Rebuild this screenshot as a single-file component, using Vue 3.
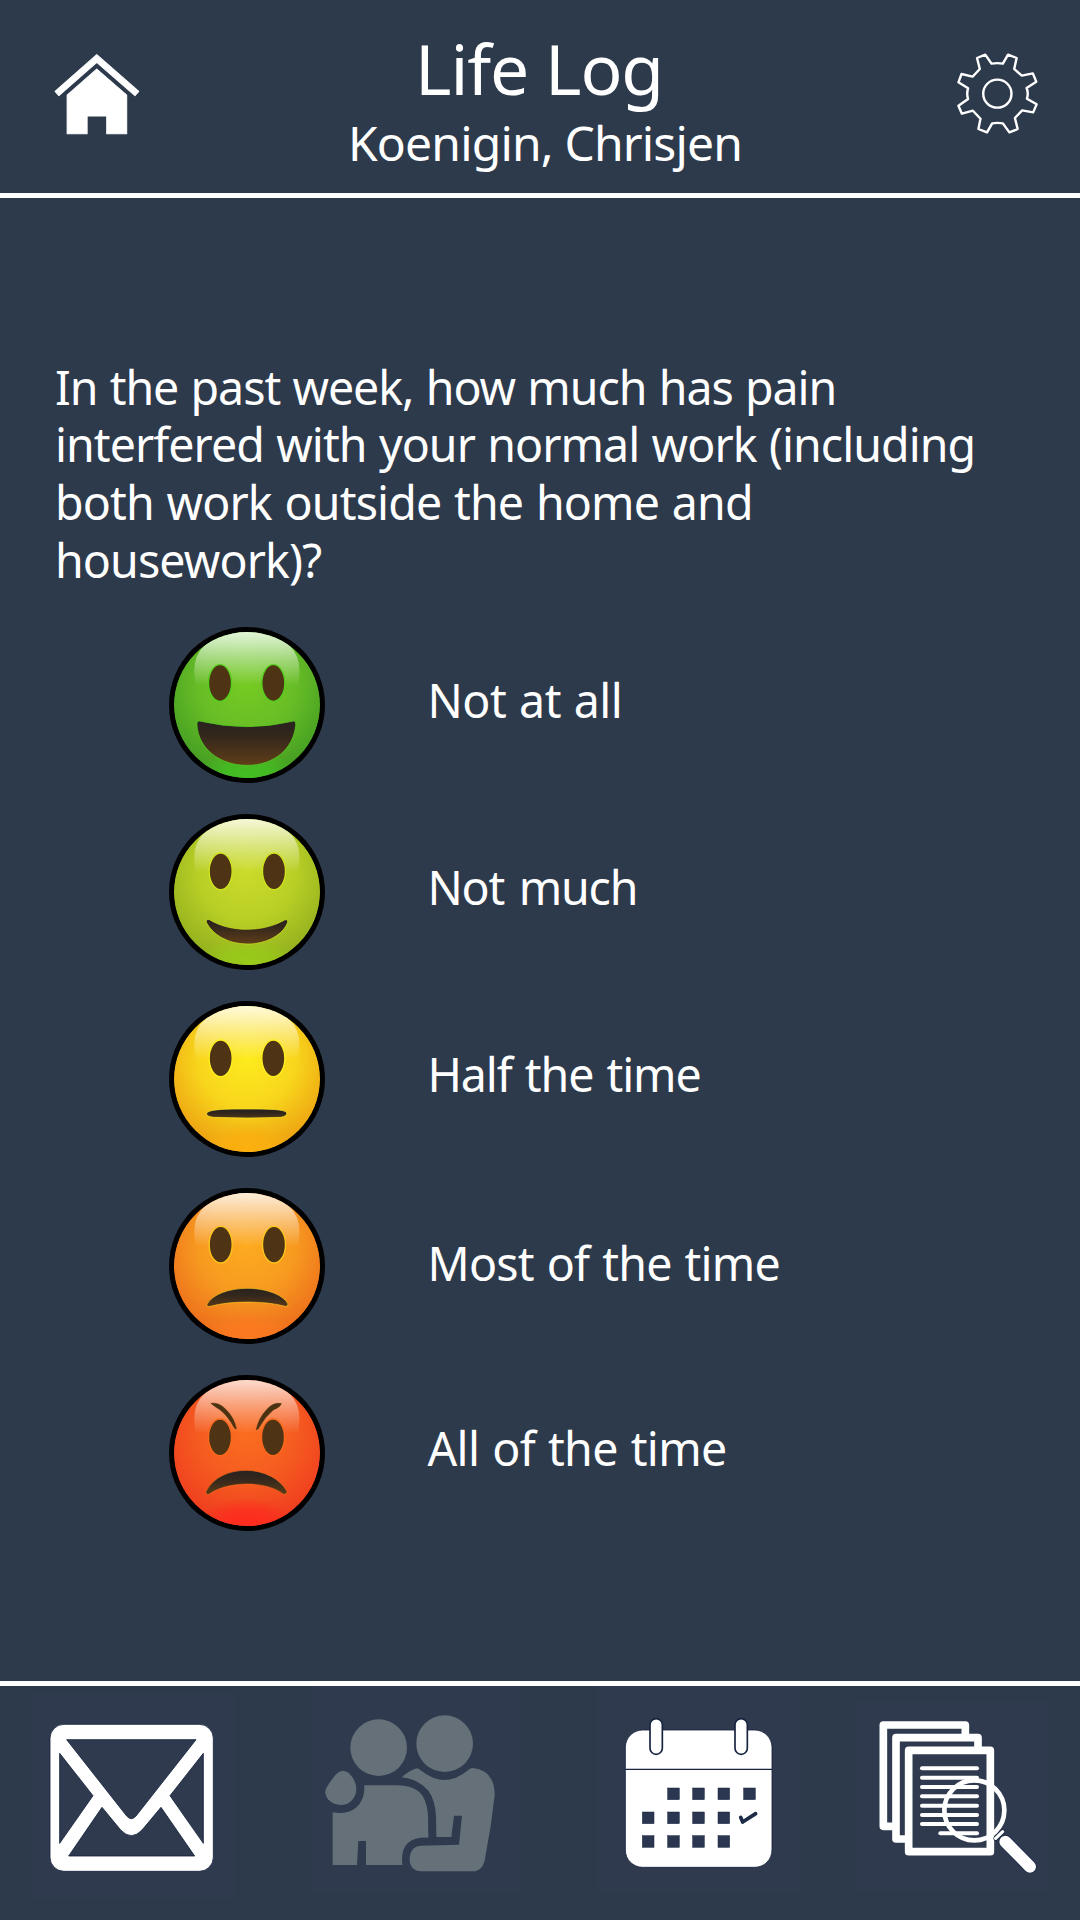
<script setup>
const question = [
  { text: 'In the past week, how much has pain', spacing: -1.04, gap: 1.2 },
  { text: 'interfered with your normal work (including', spacing: -0.94, gap: 1.2 },
  { text: 'both work outside the home and', spacing: -0.86, gap: 1.5 },
  { text: 'housework)?', spacing: -0.88, gap: 0 }
]

const options = [
  {
    id: 'great', label: 'Not at all', shift: 0, spacing: -0.5, gap: 1.2,
    core: '#76cb22', mid: '#67bd26', edge: '#409a22', glow: '#43c022', rim: '#55cf1e', gloss: '#e4f5da',
    eyes: [[180, 204], [340, 204]],
    mouth: 'M118 318 Q261 352 401 318 Q409 319 407 331 C400 402 342 451 261 451 C180 451 116 402 111 331 Q110 318 118 318 Z',
    mouthTop: 325, mouthBottom: 450
  },
  {
    id: 'good', label: 'Not much', shift: 0, spacing: -1.25, gap: 4,
    core: '#cbdb2a', mid: '#b9cf26', edge: '#8fad1d', glow: '#98cb1a', rim: '#cfe51f', gloss: '#f6f8d8',
    eyes: [[182, 208], [342, 208]],
    mouth: 'M148 353 C215 393 310 390 374 354 Q384 350 383 361 C370 396 324 426 262 426 C203 426 158 398 139 361 Q138 350 148 353 Z',
    mouthTop: 352, mouthBottom: 425
  },
  {
    id: 'half', label: 'Half the time', shift: 1, spacing: -1.1, gap: 2.2,
    core: '#fdeb1d', mid: '#f8d61c', edge: '#ec9d10', glow: '#fbb00f', rim: '#ffef20', gloss: '#fffbdc',
    eyes: [[182, 208], [340, 208]],
    mouth: 'M140 373 C146 361 190 360 261 360 C330 360 374 361 380 371 Q382 382 362 385 Q261 389 160 385 Q138 382 140 373 Z',
    mouthTop: 366, mouthBottom: 392
  },
  {
    id: 'bad', label: 'Most of the time', shift: 4, spacing: -0.75, gap: 1.5,
    core: '#fdab20', mid: '#f79a20', edge: '#ec6a1b', glow: '#fc7a20', rim: '#ffc71c', gloss: '#fdeedb',
    eyes: [[182, 206], [342, 206]],
    mouth: 'M141 385 C158 354 208 337 262 337 C318 337 368 356 383 382 Q386 392 375 391 C318 374 208 374 152 391 Q139 393 141 385 Z',
    mouthTop: 340, mouthBottom: 400
  },
  {
    id: 'worst', label: 'All of the time', shift: 1, spacing: -0.65, gap: 1.5,
    core: '#fb6d20', mid: '#f55c20', edge: '#ef3a1f', glow: '#fe2b1f', rim: '#fb6a1c', gloss: '#fbdccd',
    eyes: [[180, 223], [339, 223]],
    mouth: 'M138 385 C160 342 208 322 258 322 C310 322 360 346 381 385 Q382 395 371 394 C320 354 206 352 147 394 Q136 396 138 385 Z',
    mouthTop: 325, mouthBottom: 400,
    brows: true
  }
]

const dates = [
  [202, 353], [277, 353], [353, 353], [430, 353],
  [126, 425], [202, 425], [277, 425], [353, 425],
  [126, 496], [202, 496], [277, 496], [353, 496]
]
const textLines = [295, 323, 351, 379, 407, 435, 462]
</script>

<template>
  <div class="screen">
    <header class="top">
      <svg class="home" viewBox="150 155 260 255" preserveAspectRatio="none">
        <g fill="#fff" stroke="#fff" stroke-width="3" stroke-linejoin="round">
          <path d="M280 163 L402 273 L391 286 L280 186 L170 286 L159 273 Z" />
          <path d="M280 206 L367 284 V400 H309 V347 H252 V400 H194 V284 Z" />
        </g>
      </svg>
      <div class="titles">
        <h1>Life Log</h1>
        <h2>Koenigin, Chrisjen</h2>
      </div>
      <svg class="gear" viewBox="1204 150 248 260" preserveAspectRatio="none">
        <g fill="none" stroke="#fff" stroke-width="7" stroke-linejoin="round">
          <path d="M1268 174 L1292 164 L1310 191 Q1327 188 1343 191 L1358 164 L1383 174 L1376 207 L1398 227 L1430 220 L1440 245 L1412 264 Q1418 280 1413 296 L1441 313 L1431 337 L1399 331 L1378 354 L1386 387 L1362 397 L1343 370 Q1327 367 1312 370 L1297 397 L1272 387 L1278 356 L1256 332 L1224 341 L1214 317 L1242 297 Q1237 281 1242 265 L1214 247 L1223 222 L1255 230 L1276 207 Z" />
          <ellipse cx="1327" cy="281" rx="41" ry="42" />
        </g>
      </svg>
    </header>

    <main>
      <p class="question">
        <span v-for="q in question" :key="q.text" :style="{ letterSpacing: q.spacing + 'px', wordSpacing: q.gap + 'px' }">{{ q.text }}</span>
      </p>

      <ul class="options">
        <li v-for="o in options" :key="o.id">
          <svg class="face" viewBox="27 36 468 468">
            <defs>
              <radialGradient :id="o.id + '-skin'" cx="0.5" cy="0.36" r="0.66">
                <stop offset="0" :stop-color="o.core" />
                <stop offset="0.5" :stop-color="o.mid" />
                <stop offset="1" :stop-color="o.edge" />
              </radialGradient>
              <radialGradient :id="o.id + '-glow'" gradientUnits="userSpaceOnUse" cx="0" cy="0" r="1" gradientTransform="translate(261 480) scale(150 75)">
                <stop offset="0" :stop-color="o.glow" />
                <stop offset="0.5" :stop-color="o.glow" stop-opacity="0.75" />
                <stop offset="1" :stop-color="o.glow" stop-opacity="0" />
              </radialGradient>
              <linearGradient :id="o.id + '-gloss'" gradientUnits="userSpaceOnUse" x1="0" y1="51" x2="0" y2="208">
                <stop offset="0" :stop-color="o.gloss" />
                <stop offset="0.5" :stop-color="o.gloss" stop-opacity="0.5" />
                <stop offset="1" :stop-color="o.gloss" stop-opacity="0.02" />
              </linearGradient>
              <linearGradient :id="o.id + '-mouth'" gradientUnits="userSpaceOnUse" x1="0" :y1="o.mouthTop" x2="0" :y2="o.mouthBottom">
                <stop offset="0" stop-color="#2b2320" />
                <stop offset="0.3" stop-color="#33271c" />
                <stop offset="1" stop-color="#5f3d18" />
              </linearGradient>
              <clipPath :id="o.id + '-clip'"><circle cx="261" cy="270" r="219" /></clipPath>
            </defs>
            <circle cx="261" cy="270" r="234" fill="#000" />
            <g :clip-path="`url(#${o.id}-clip)`">
              <circle cx="261" cy="270" r="220" :fill="`url(#${o.id}-skin)`" />
              <ellipse cx="261" cy="480" rx="150" ry="75" :fill="`url(#${o.id}-glow)`" />
              <path d="M103 170 Q101 125 132 93 Q186 45 261 45 Q336 45 390 93 Q420 125 418 170 L416 208 H106 Z" :fill="`url(#${o.id}-gloss)`" />
            </g>
            <g fill="#4e3414" :stroke="o.rim" stroke-width="4">
              <ellipse v-for="(e, i) in o.eyes" :key="i" :cx="e[0]" :cy="e[1]" rx="34.5" ry="55" />
            </g>
            <path :d="o.mouth" :fill="`url(#${o.id}-mouth)`" :stroke="o.rim" stroke-width="2" />
            <g v-if="o.brows" fill="#4a3211" stroke="#4a3211" stroke-width="2">
              <path d="M153 121 Q178 117 200 142 Q222 165 229 197 L224 196 Q204 158 180 140 Q160 128 153 121 Z" />
              <path d="M364 122 Q342 116 320 140 Q296 165 289 200 L294 198 Q315 160 341 140 Q360 133 364 122 Z" />
            </g>
          </svg>
          <span class="label" :style="{ paddingTop: o.shift + 'px', letterSpacing: o.spacing + 'px', wordSpacing: o.gap + 'px' }">{{ o.label }}</span>
        </li>
      </ul>
    </main>

    <footer class="bottom">
      <svg class="mail" viewBox="30 66 618 621">
        <rect x="90" y="163" width="490" height="441" rx="42" fill="#fff" stroke="#16233f" stroke-width="2.5" />
        <g fill="#2f3a4e" stroke="#16233f" stroke-width="2.5">
          <path d="M140 209 H528 L348 438 Q334 454 320 438 Z" />
          <path d="M119 250 L219 377 L119 520 Z" />
          <path d="M550 250 L450 377 L550 520 Z" />
          <path d="M146 558 L246 412 L302 480 Q334 514 366 480 L423 412 L524 558 Z" />
        </g>
      </svg>
      <svg class="friends" viewBox="876 48 624 621">
        <g fill="#657078">
          <circle cx="1076" cy="233" r="85" />
          <circle cx="1274" cy="221" r="85" />
          <path d="M949 312 Q968 294 987 310 Q1009 332 1009 358 A47 47 0 0 1 962 405 Q940 405 924 388 Q911 370 919 354 Q930 334 949 312 Z" />
          <path d="M1033 346 H1130 Q1186 346 1208 378 Q1223 403 1224 440 L1225 503 Q1146 500 1146 568 L1147 585 H1038 V513 H1015 L1011 585 H938 V427 Q981 434 1007 414 Q1036 390 1033 346 Z" />
          <path d="M1145 322 Q1166 303 1190 295 Q1196 295 1202 301 Q1274 359 1344 301 Q1350 294 1358 294 Q1424 301 1424 375 Q1414 470 1396 560 Q1391 604 1356 604 H1204 Q1169 602 1169 566 Q1171 528 1204 527 L1317 524 L1326 437 H1302 L1294 501 H1249 L1248 440 Q1246 390 1225 362 Q1195 327 1145 322 Z" />
        </g>
      </svg>
      <svg class="calendar" viewBox="-12 48 618 621">
        <rect x="76" y="180" width="440" height="412" rx="52" fill="#fff" stroke="#16233f" stroke-width="2.5" />
        <path d="M76 298 H516" stroke="#16233f" stroke-width="4" />
        <g fill="#fff" stroke="#16233f" stroke-width="5">
          <rect x="150" y="146" width="37" height="107" rx="18.5" />
          <rect x="405" y="146" width="37" height="107" rx="18.5" />
        </g>
        <g fill="#2b3750" stroke="#16233f" stroke-width="1.5">
          <rect v-for="(d, i) in dates" :key="i" :x="d[0] + 1" :y="d[1] + 1" width="35" height="35" />
        </g>
        <path d="M422 442 L428 456 L467 431" fill="none" stroke="#1e2b47" stroke-width="11" stroke-linecap="round" stroke-linejoin="round" />
      </svg>
      <svg class="records" viewBox="765 90 576 576">
        <g fill="#2f3a4e" stroke="#fff" stroke-width="23" stroke-linejoin="round">
          <rect x="850" y="165" width="246" height="304" />
          <rect x="888" y="203" width="246" height="304" />
          <rect x="926" y="241" width="245" height="304" />
        </g>
        <g stroke="#fff" stroke-width="12" stroke-linecap="round">
          <path v-for="y in textLines" :key="y" :d="`M966 ${y} H1131`" />
          <path d="M1021 490 H1131" />
        </g>
        <circle cx="1123" cy="421" r="90" fill="none" stroke="#fff" stroke-width="14" />
        <path d="M1187 505 L1208 485" stroke="#16233f" stroke-width="14" stroke-linecap="round" />
        <path d="M1187 505 L1208 485" stroke="#fff" stroke-width="10" stroke-linecap="round" />
        <path d="M1216 515 L1290 590" stroke="#16233f" stroke-width="40" stroke-linecap="round" />
        <path d="M1216 515 L1290 590" stroke="#fff" stroke-width="36" stroke-linecap="round" />
      </svg>
    </footer>
  </div>
</template>

<style>
body { margin: 0; background: #2d3a4b; }
</style>

<style scoped>
.screen {
  width: 1080px;
  height: 1920px;
  display: flex;
  flex-direction: column;
  overflow: hidden;
  background: #2d3a4b;
  color: #fff;
  font-family: "Noto Sans", "Open Sans", sans-serif;
}
.top {
  box-sizing: border-box;
  height: 198px;
  flex: none;
  display: flex;
  justify-content: space-between;
  align-items: flex-start;
  padding: 0 40px 0 51.6px;
  border-bottom: 5px solid #fff;
}
.home { width: 89.5px; height: 85px; margin-top: 52px; }
.gear { width: 85.4px; height: 86.7px; margin-top: 50px; }
.titles { display: flex; flex-direction: column; align-items: center; padding: 27px 5.6px 0 0; }
h1, h2 { margin: 0; font-weight: 400; white-space: nowrap; }
h1 { font-size: 69.5px; line-height: 82px; letter-spacing: -1.1px; margin-right: 12px; }
h2 { font-size: 48px; line-height: 68px; letter-spacing: -0.83px; }
main { flex: 1; padding-top: 160.5px; }
.question {
  display: flex;
  flex-direction: column;
  margin: 0 0 0 55px;
  font-size: 46.5px;
  line-height: 57.7px;
  white-space: nowrap;
}
.options { list-style: none; margin: 37.5px 0 0 169px; padding: 0; display: flex; flex-direction: column; gap: 31px; }
.options li { display: flex; align-items: center; gap: 102.5px; height: 156px; }
.face { width: 156px; height: 156px; flex: none; }
.label { font-size: 46.5px; line-height: 60px; margin-top: -10px; white-space: nowrap; }
.bottom {
  box-sizing: border-box;
  height: 239px;
  flex: none;
  display: flex;
  align-items: flex-start;
  border-top: 5px solid #fff;
}
.bottom svg { flex: none; background: #2f3a4e; }
.mail { width: 206px; height: 207px; margin: 6px 0 0 30px; }
.friends { width: 208px; height: 207px; margin-left: 76px; }
.calendar { width: 206px; height: 207px; margin-left: 76px; }
.records { width: 192px; height: 192px; margin: 14px 0 0 53px; }
</style>
